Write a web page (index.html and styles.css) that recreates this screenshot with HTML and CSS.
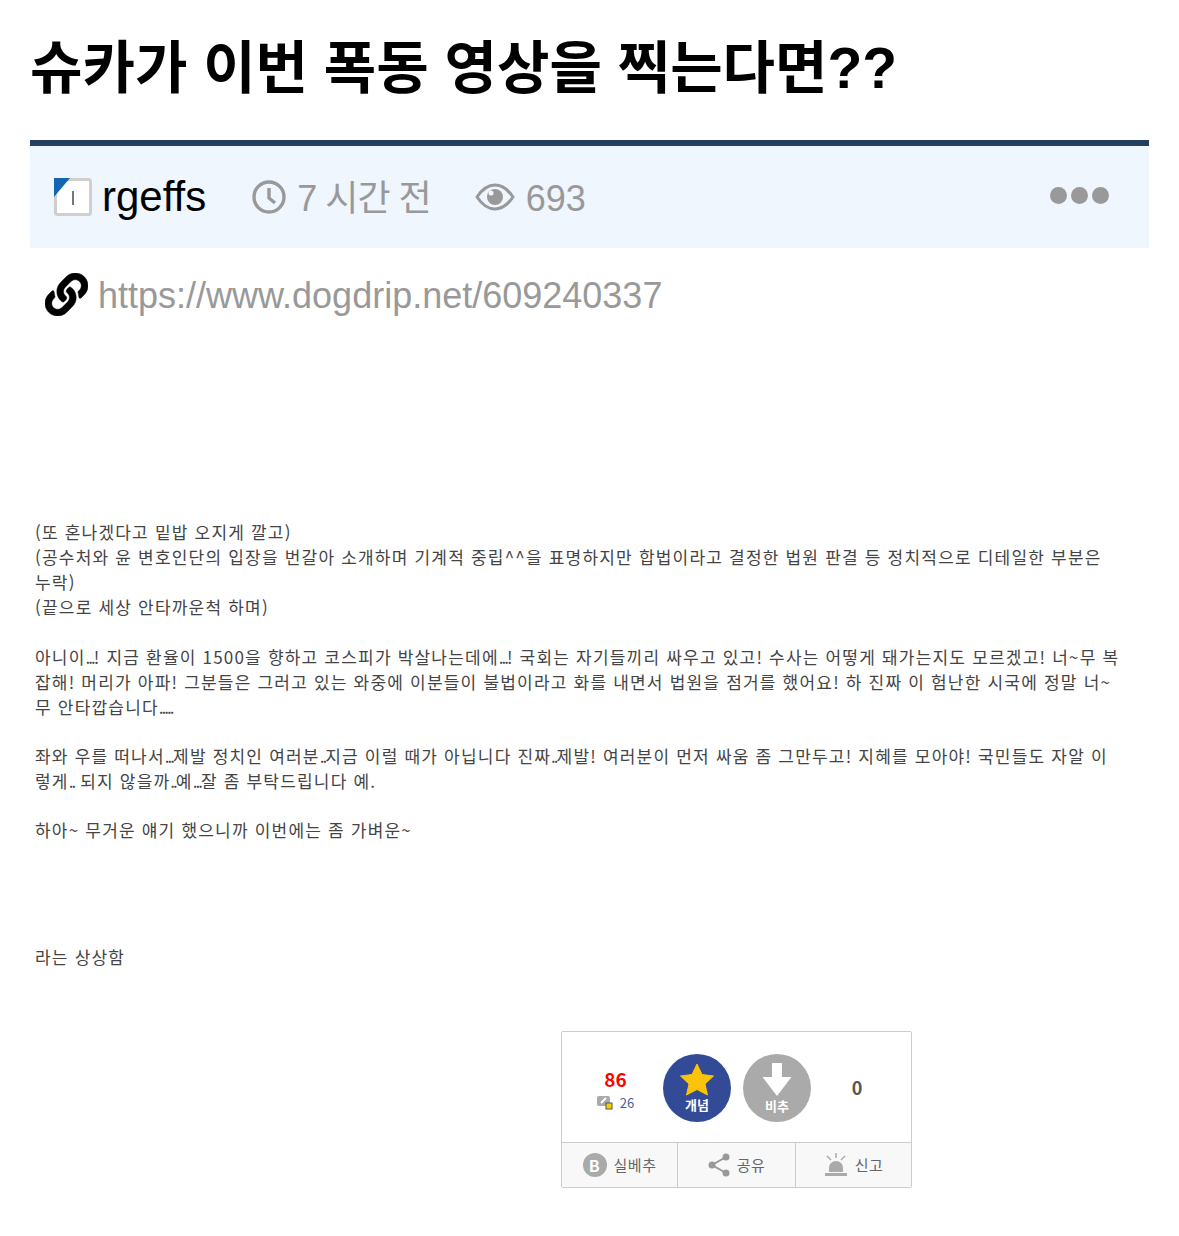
FILE: index.html
```html
<!DOCTYPE html>
<html lang="ko">
<head>
    <meta charset="UTF-8">
    <meta name="viewport" content="width=device-width, initial-scale=1.0">
    <title>슈카가 이번 폭동 영상을 찍는다면??</title>
    <link rel="stylesheet" href="styles.css">
</head>
<body>
    <main class="page">
        <h1 class="title">슈카가 이번 폭동 영상을 찍는다면??</h1>

        <div class="meta">
            <svg class="avatar" viewBox="0 0 38 38" width="38" height="38">
                <rect x="1.500" y="1.500" width="35" height="35" rx="2" fill="#fff" stroke="#cfcfcf" stroke-width="3"/>
                <path d="M0 0H16L0 19Z" fill="#1565b5"/>
                <rect x="18" y="13" width="2" height="14" fill="#777"/>
            </svg>
            <span class="author">rgeffs</span>
            <span class="meta-item time">
                <svg viewBox="0 0 34 34" width="34" height="34">
                    <circle cx="17" cy="17" r="15" fill="none" stroke="#999" stroke-width="3.400"/>
                    <path d="M17 8V18L23 23" fill="none" stroke="#999" stroke-width="3.400"/>
                </svg>
                <span class="time-text">7 시간 전</span>
            </span>
            <span class="meta-item views">
                <svg viewBox="0 0 40 28" width="40" height="28">
                    <path d="M2 14C8 5 14 2 20 2S32 5 38 14C32 23 26 26 20 26S8 23 2 14Z" fill="none" stroke="#999" stroke-width="3"/>
                    <circle cx="20" cy="14" r="8" fill="#999"/>
                    <circle cx="16" cy="10" r="2.500" fill="#eff6fe"/>
                </svg>
                <span class="views-text">693</span>
            </span>
            <span class="more"><i></i><i></i><i></i></span>
        </div>

        <div class="link-row">
            <svg viewBox="0 0 512 512" width="43" height="43">
                <path fill="#000" stroke="#000" stroke-width="6" d="M326.612 185.391c59.747 59.809 58.927 155.698.36 214.59-.11.12-.24.25-.36.37l-67.2 67.2c-59.27 59.27-155.699 59.262-214.96 0-59.27-59.26-59.27-155.7 0-214.96l37.106-37.106c9.84-9.84 26.786-3.3 27.294 10.606.648 17.722 3.826 35.527 9.69 52.721 1.986 5.822.567 12.262-3.783 16.612l-13.087 13.087c-28.026 28.026-28.905 73.66-1.155 101.96 28.024 28.579 74.086 28.749 102.325.51l67.2-67.19c28.191-28.191 28.073-73.757 0-101.83-3.701-3.694-7.429-6.564-10.341-8.569a16.037 16.037 0 0 1-6.947-12.606c-.396-10.567 3.348-21.456 11.698-29.806l21.054-21.055c5.521-5.521 14.182-6.199 20.584-1.731a152.482 152.482 0 0 1 20.522 17.197zM467.547 44.449c-59.261-59.262-155.69-59.27-214.96 0l-67.2 67.2c-.12.12-.25.25-.36.37-58.566 58.892-59.387 154.781.36 214.59a152.454 152.454 0 0 0 20.521 17.196c6.402 4.468 15.064 3.789 20.584-1.731l21.054-21.055c8.35-8.35 12.094-19.239 11.698-29.806a16.037 16.037 0 0 0-6.947-12.606c-2.912-2.005-6.64-4.875-10.341-8.569-28.073-28.073-28.191-73.639 0-101.83l67.2-67.19c28.239-28.239 74.3-28.069 102.325.51 27.75 28.3 26.872 73.934-1.155 101.96l-13.087 13.087c-4.35 4.35-5.769 10.79-3.783 16.612 5.864 17.194 9.042 34.999 9.69 52.721.509 13.906 17.454 20.446 27.294 10.606l37.106-37.106c59.271-59.259 59.271-155.699.001-214.959z"/>
            </svg>
            <a class="link" href="#">https://www.dogdrip.net/609240337</a>
        </div>

        <div class="content">
            <p>(또 혼나겠다고 밑밥 오지게 깔고)<br>
            (공수처와 윤 변호인단의 입장을 번갈아 소개하며 기계적 중립^^을 표명하지만 합법이라고 결정한 법원 판결 등 정치적으로 디테일한 부분은<br>
            누락)<br>
            (끝으로 세상 안타까운척 하며)</p>
            <p>아니이<span class="dots">...</span>! 지금 환율이 1500을 향하고 코스피가 박살나는데에<span class="dots">...</span>! 국회는 자기들끼리 싸우고 있고! 수사는 어떻게 돼가는지도 모르겠고! 너~무 복<br>
            잡해! 머리가 아파! 그분들은 그러고 있는 와중에 이분들이 불법이라고 화를 내면서 법원을 점거를 했어요! 하 진짜 이 험난한 시국에 정말 너~<br>
            무 안타깝습니다<span class="dots">.....</span></p>
            <p>좌와 우를 떠나서<span class="dots">...</span>제발 정치인 여러분<span class="dots">..</span>지금 이럴 때가 아닙니다 진짜<span class="dots">..</span>제발! 여러분이 먼저 싸움 좀 그만두고! 지혜를 모아야! 국민들도 자알 이<br>
            렇게<span class="dots">..</span> 되지 않을까<span class="dots">..</span>예<span class="dots">...</span>잘 좀 부탁드립니다 예.</p>
            <p>하아~ 무거운 얘기 했으니까 이번에는 좀 가벼운~</p>
            <p class="last">라는 상상함</p>
        </div>

        <div class="vote-box">
            <div class="vote-top">
                <div class="score">
                    <strong>86</strong>
                    <span class="score-sub">
                        <svg viewBox="0 0 16 15" width="16" height="15">
                            <rect x="0" y="1" width="13" height="10" rx="2" fill="#aaa"/>
                            <path d="M4 8L9 3" stroke="#fff" stroke-width="2"/>
                            <rect x="9" y="8" width="6" height="6" fill="#f5d000" stroke="#555"/>
                        </svg>
                        26
                    </span>
                </div>
                <div class="vote-btn up">
                    <svg viewBox="0 0 34 33" width="34" height="33">
                        <path d="M17 1L22 11.500L33.500 13L25 21L27.500 32L17 26.500L6.500 32L9 21L.5 13L12 11.500Z" fill="#fcc30b" stroke="#fcc30b" stroke-linejoin="round" stroke-width="1"/>
                    </svg>
                    <span>개념</span>
                </div>
                <div class="vote-btn down">
                    <svg viewBox="0 0 30 34" width="30" height="34">
                        <path d="M10 0H20V14H29.500L15 33L.5 14H10Z" fill="#fff"/>
                    </svg>
                    <span>비추</span>
                </div>
                <div class="down-count">0</div>
            </div>
            <div class="vote-bottom">
                <div class="tool">
                    <span class="b-icon">B</span>
                    실베추
                </div>
                <div class="tool">
                    <svg viewBox="0 0 22 24" width="22" height="24">
                        <path d="M18 4L4 12L18 20" fill="none" stroke="#999" stroke-width="2"/>
                        <circle cx="18" cy="4" r="3.500" fill="#999"/>
                        <circle cx="4" cy="12" r="3.500" fill="#999"/>
                        <circle cx="18" cy="20" r="3.500" fill="#999"/>
                    </svg>
                    공유
                </div>
                <div class="tool">
                    <svg viewBox="0 0 24 24" width="24" height="24">
                        <path d="M5 19V15C5 11 8 8 12 8S19 11 19 15V19Z" fill="#aaa"/>
                        <rect x="1" y="20" width="22" height="3" fill="#aaa"/>
                        <path d="M12 0V5M3 3L7 7M21 3L17 7" stroke="#aaa" stroke-width="1.500"/>
                    </svg>
                    신고
                </div>
            </div>
        </div>
    </main>
</body>
</html>
```

FILE: styles.css
```css
body {
    margin: 0;
    background-color: #fff;
    color: #000;
    font-family: "Liberation Sans", "Noto Sans CJK KR", sans-serif;
}

.page {
    padding: 0 30px;
}

.title {
    margin: 0;
    height: 140px;
    font-size: 57px;
    line-height: 136px;
    font-weight: bold;
    white-space: nowrap;
}

.meta {
    display: flex;
    align-items: center;
    height: 102px;
    padding: 0 40px 0 24px;
    border-top: 6px solid #25405f;
    background-color: #eff6fe;
    color: #999;
    font-size: 36px;
}

.avatar {
    margin-right: 10px;
}

.author {
    margin-right: 46px;
    color: #000;
    font-size: 42px;
}

.meta-item {
    display: flex;
    align-items: center;
    gap: 11px;
}

.time {
    margin-right: 44px;
}

.time-text {
    margin-bottom: 4px;
    letter-spacing: -1px;
}

.views-text {
    margin-top: 4px;
}

.more {
    display: flex;
    gap: 4px;
    margin: 0 0 4px auto;
}

.more i {
    width: 17px;
    height: 17px;
    border-radius: 50%;
    background-color: #999;
}

.link-row {
    display: flex;
    align-items: center;
    gap: 10px;
    height: 96px;
    padding-left: 15px;
}

.link-row svg {
    margin-bottom: 4px;
}

.link {
    color: #999;
    font-size: 36px;
    text-decoration: none;
}

.content {
    margin-top: 175px;
    padding-left: 5px;
    color: #444;
    font-family: "Noto Sans CJK KR", sans-serif;
    font-size: 17px;
    letter-spacing: 1.200px;
    line-height: 25.150px;
    white-space: nowrap;
}

.content p {
    margin: 0 0 24px;
}

.content .last {
    margin: 101px 0 62px;
}

.dots {
    letter-spacing: -2px;
}

.vote-box {
    width: 349px;
    margin-left: 531px;
    border: 1px solid #ccc;
    border-radius: 2px;
    font-family: "Noto Sans CJK KR", sans-serif;
}

.vote-top {
    display: flex;
    align-items: center;
    height: 107px;
    padding: 3px 0 0 28px;
}

.score {
    display: flex;
    flex-direction: column;
    align-items: center;
    width: 51px;
    margin-right: 22px;
    padding-top: 2px;
}

.score strong {
    color: #f00;
    font-size: 19px;
    line-height: 24px;
}

.score-sub {
    display: flex;
    align-items: center;
    gap: 7px;
    margin-top: 3px;
    color: #4a5f9e;
    font-size: 13px;
    line-height: 18px;
}

.vote-btn {
    display: flex;
    flex-direction: column;
    align-items: center;
    justify-content: center;
    width: 68px;
    height: 68px;
    border-radius: 50%;
    color: #fff;
    font-size: 13px;
    font-weight: bold;
    line-height: 17px;
}

.vote-btn.up {
    margin-right: 12px;
    background-color: #334a97;
}

.vote-btn.down {
    background-color: #aaa;
}

.down-count {
    width: 92px;
    margin-bottom: 2px;
    color: #555;
    font-size: 18px;
    font-weight: bold;
    text-align: center;
}

.vote-bottom {
    display: grid;
    grid-template-columns: 115px 118px 116px;
    height: 44px;
    border-top: 1px solid #ccc;
    background-color: #f8f8f8;
}

.tool {
    display: flex;
    align-items: center;
    justify-content: center;
    gap: 7px;
    color: #666;
    font-size: 15px;
    letter-spacing: .5px;
}

.tool + .tool {
    border-left: 1px solid #ccc;
}

.b-icon {
    width: 24px;
    height: 24px;
    border-radius: 50%;
    background-color: #aaa;
    color: #fff;
    font-size: 16px;
    font-weight: bold;
    line-height: 24px;
    text-align: center;
}
```
